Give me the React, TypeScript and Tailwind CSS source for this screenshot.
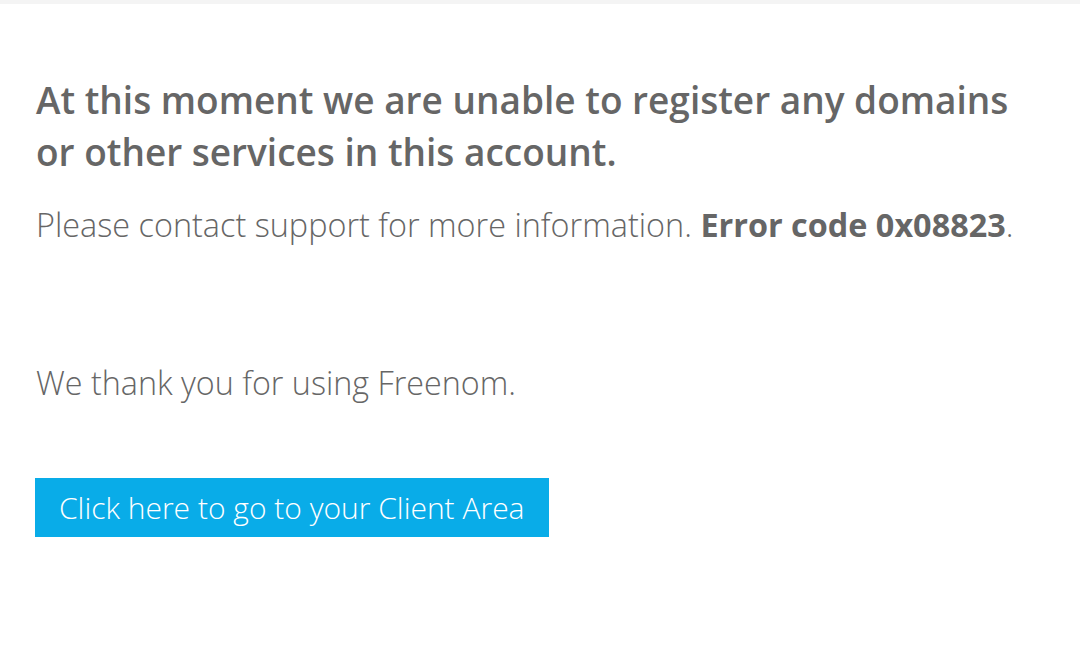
export default function App() {
  return (
    <div className="min-h-[668px] w-[1080px] bg-white" style={{ fontFamily: '"Open Sans", sans-serif' }}>
      <div className="h-[4px] bg-[#f4f4f4]" />
      <div className="pl-[35px] pt-[70px]">
        <h1 className="max-w-[1002px] pl-[1px] text-[37px] leading-[52px] font-semibold text-[#666666]">
          At this moment we are unable to register any domains or other services in this account.
        </h1>
        <p className="mt-[22px] pl-[1px] text-[32.4px] leading-[48px] font-light text-[#666666]">
          Please contact support for more information. <span className="font-bold">Error code 0x08823</span>.
        </p>
        <p className="mt-[110px] pl-[1px] text-[32.3px] leading-[48px] font-light text-[#666666]">We thank you for using Freenom.</p>
        <button className="mt-[72px] bg-[#09ace8] px-[24px] h-[59px] text-[30px] font-light text-white">
          Click here to go to your Client Area
        </button>
      </div>
    </div>
  );
}
